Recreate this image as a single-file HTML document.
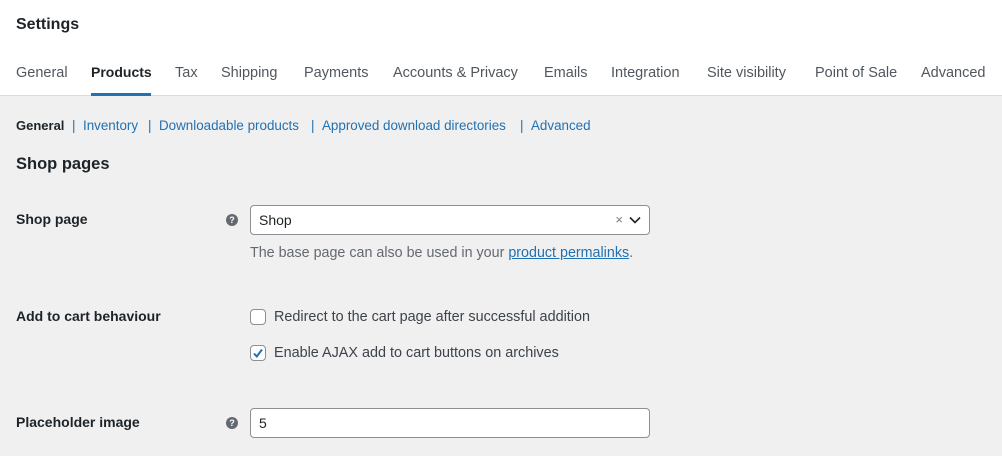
<!DOCTYPE html><html><head><style>
body{margin:0;width:1002px;height:456px;overflow:hidden;background:#f0f0f1;font-family:"Liberation Sans",sans-serif;color:#1d2327;position:relative}
.hdr{position:absolute;left:0;top:0;width:1002px;height:95px;background:#fff;border-bottom:1px solid #dcdcde}
.a{position:absolute;white-space:nowrap}
.tab{font-size:14.5px;color:#50575e;top:65px}
.sub{font-size:13.4px;top:118px;color:#2271b1}
.lab{font-size:14px;font-weight:bold;left:16px}
.help{width:12px;height:12px;border-radius:50%;background:#646970;color:#fff;font-size:9px;font-weight:bold;text-align:center;line-height:12px;left:226px}
.box{left:250px;width:398px;height:28px;border:1px solid #8c8f94;border-radius:4px;background:#fff;font-size:14px;line-height:28px;text-indent:8px}
.cb{left:250px;width:14px;height:14px;border:1px solid #8c8f94;border-radius:4px;background:#fff}
.t{font-size:14.4px;color:#3c434a;left:274px}
</style></head><body>
<div class="hdr"></div>
<div class="a" style="left:16px;top:16px;font-size:16px;font-weight:bold">Settings</div>
<div class="a tab" style="left:16px">General</div>
<div class="a tab" style="left:91px;color:#1d2327;font-weight:bold;font-size:14px;top:64px">Products</div>
<div class="a" style="left:91px;top:93px;width:60px;height:3px;background:#2271b1"></div>
<div class="a tab" style="left:175px">Tax</div>
<div class="a tab" style="left:221px">Shipping</div>
<div class="a tab" style="left:304px">Payments</div>
<div class="a tab" style="left:393px">Accounts &amp; Privacy</div>
<div class="a tab" style="left:544px">Emails</div>
<div class="a tab" style="left:611px">Integration</div>
<div class="a tab" style="left:707px">Site visibility</div>
<div class="a tab" style="left:815px">Point of Sale</div>
<div class="a tab" style="left:921px">Advanced</div>
<div class="a sub" style="left:16px;color:#1d2327;font-weight:bold;font-size:13px">General</div>
<div class="a sub" style="left:72px">|</div>
<div class="a sub" style="left:83px">Inventory</div>
<div class="a sub" style="left:148px">|</div>
<div class="a sub" style="left:159px">Downloadable products</div>
<div class="a sub" style="left:311px">|</div>
<div class="a sub" style="left:322px">Approved download directories</div>
<div class="a sub" style="left:520px">|</div>
<div class="a sub" style="left:531px">Advanced</div>
<div class="a" style="left:16px;top:155px;font-size:16.5px;font-weight:bold">Shop pages</div>
<div class="a lab" style="top:211px">Shop page</div>
<div class="a help" style="top:214px">?</div>
<div class="a box" style="top:205px">Shop<span style="position:absolute;right:26px;top:0;color:#787c82;font-size:13px;text-indent:0">×</span><svg style="position:absolute;right:8px;top:10px" width="12" height="8" viewBox="0 0 12 8"><path d="M1 1.5l5 5 5-5" stroke="#1d2327" stroke-width="1.6" fill="none"/></svg></div>
<div class="a" style="left:250px;top:245px;font-size:14.3px;color:#646970">The base page can also be used in your <span style="color:#2271b1;text-decoration:underline">product permalinks</span>.</div>
<div class="a lab" style="top:308px">Add to cart behaviour</div>
<div class="a cb" style="top:309px"></div>
<div class="a t" style="top:309px">Redirect to the cart page after successful addition</div>
<div class="a cb" style="top:345px"><svg width="14" height="14" viewBox="0 0 14 14" style="position:absolute;left:0;top:0"><path d="M3 7.5l2.8 3L11 3.5" stroke="#2271b1" stroke-width="2" fill="none"/></svg></div>
<div class="a t" style="top:345px">Enable AJAX add to cart buttons on archives</div>
<div class="a lab" style="top:414px">Placeholder image</div>
<div class="a help" style="top:417px">?</div>
<div class="a box" style="top:408px">5</div>
</body></html>
